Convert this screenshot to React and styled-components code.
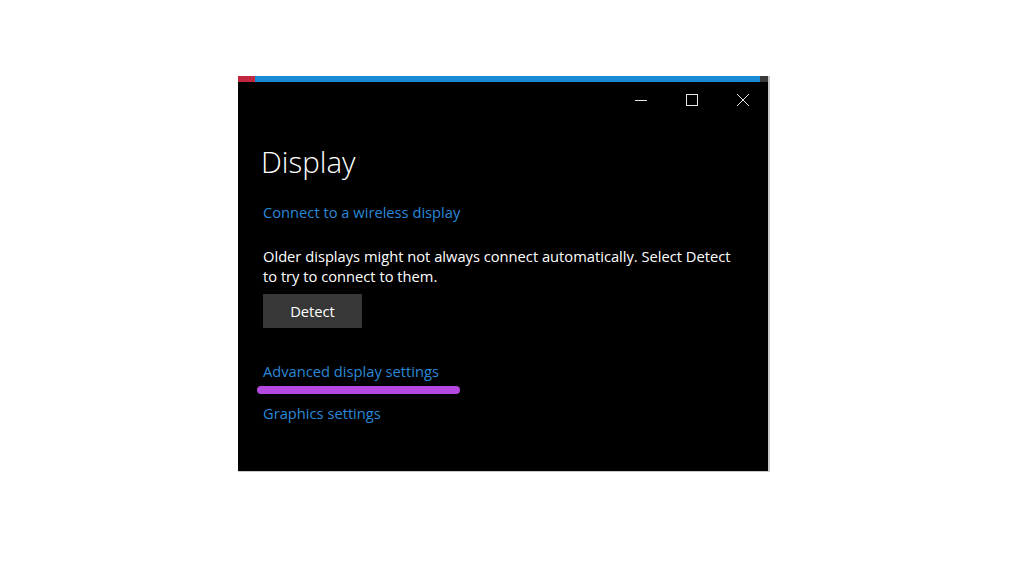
import styled, { createGlobalStyle } from "styled-components";

const GlobalStyle = createGlobalStyle`
  html, body {
    margin: 0;
    padding: 0;
    background: #ffffff;
  }
  body {
    font-family: "Open Sans", "Noto Sans", sans-serif;
  }
`;

const Page = styled.div`
  width: 1024px;
  height: 572px;
  padding: 76px 0 0 238px;
  box-sizing: border-box;
`;

const Window = styled.div`
  width: 532px;
  height: 396px;
  display: flex;
  flex-direction: column;
  background: #000;
  border-right: 2px solid #c8c8c8;
  border-bottom: 1px solid #c8c8c8;
  box-sizing: border-box;
`;

const AccentBar = styled.div`
  display: flex;
  height: 6px;
  flex-shrink: 0;
`;

const AccentPart = styled.div`
  height: 100%;
  width: ${(p) => p.$w || "auto"};
  flex: ${(p) => (p.$w ? "none" : 1)};
  background: ${(p) => p.$color};
`;

const TitleBar = styled.div`
  display: flex;
  justify-content: flex-end;
  height: 36px;
`;

const CaptionButton = styled.div`
  width: 51px;
  height: 36px;
  display: flex;
  align-items: center;
  justify-content: center;
  color: #e6e6e6;
`;

const Content = styled.div`
  padding: 26px 0 0 25px;
  display: flex;
  flex-direction: column;
  align-items: flex-start;
`;

const Title = styled.h1`
  margin: 0 0 0 -2px;
  font-weight: 300;
  font-size: 29.5px;
  line-height: 36px;
  color: #ffffff;
`;

const Link = styled.a`
  font-size: 14.7px;
  line-height: 20px;
  color: #2a88d8;
  text-decoration: none;
  margin-top: ${(p) => p.$top || 0}px;
`;

const Text = styled.p`
  margin: 24px 0 0;
  font-size: 14.7px;
  line-height: 20px;
  color: #ffffff;
  width: 476px;
`;

const Button = styled.button`
  margin-top: 8px;
  width: 99px;
  height: 34px;
  border: none;
  background: #373737;
  color: #ffffff;
  font-family: inherit;
  font-size: 14.7px;
  padding: 0;
`;

const Highlight = styled.div`
  width: 203px;
  height: 8px;
  border-radius: 4px;
  background: #b448e0;
  margin: 5px 0 0 -6px;
`;

const Minimize = () => (
  <svg width="12" height="12" viewBox="0 0 12 12">
    <path d="M0 6.5h12" stroke="currentColor" strokeWidth="1" />
  </svg>
);

const Maximize = () => (
  <svg width="12" height="12" viewBox="0 0 12 12">
    <rect x="0.5" y="0.5" width="11" height="11" fill="none" stroke="currentColor" strokeWidth="1" />
  </svg>
);

const Close = () => (
  <svg width="12" height="12" viewBox="0 0 12 12">
    <path d="M0 0L12 12M12 0L0 12" stroke="currentColor" strokeWidth="1" />
  </svg>
);

const App = () => {
  return (
    <Page>
      <GlobalStyle />
      <Window>
        <AccentBar>
          <AccentPart $w="17px" $color="#c1283f" />
          <AccentPart $color="#1a8ad6" />
          <AccentPart $w="8px" $color="#3a3a3a" />
        </AccentBar>
        <TitleBar>
          <CaptionButton>
            <Minimize />
          </CaptionButton>
          <CaptionButton>
            <Maximize />
          </CaptionButton>
          <CaptionButton>
            <Close />
          </CaptionButton>
        </TitleBar>
        <Content>
          <Title>Display</Title>
          <Link $top={22}>Connect to a wireless display</Link>
          <Text>
            Older displays might not always connect automatically. Select Detect
            to try to connect to them.
          </Text>
          <Button>Detect</Button>
          <Link $top={33}>Advanced display settings</Link>
          <Highlight />
          <Link $top={9}>Graphics settings</Link>
        </Content>
      </Window>
    </Page>
  );
};

export default App;
